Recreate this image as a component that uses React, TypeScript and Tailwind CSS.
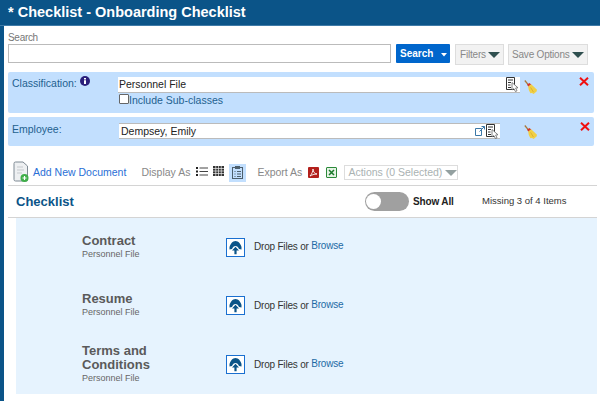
const Caret = ({ w = 12, h = 6, c = "#2f4f4f" }: { w?: number; h?: number; c?: string }) => (
  <svg width={w} height={h} viewBox="0 0 12 6" className="shrink-0"><path d="M0 0H12L6 6Z" fill={c} /></svg>
);

const Broom = () => (
  <svg width="13" height="14" viewBox="0 0 13 14" className="shrink-0">
    <path d="M0.8 0.5 L4.4 4.8" stroke="#a8793a" strokeWidth="1.3" />
    <path d="M3 4.8 L5.4 3 L7.2 4.6 L4.6 6.8Z" fill="#d4352a" />
    <path d="M4.2 6.4 L7.2 4.2 L13 9.8 L12.6 11.4 L9.6 14 L8 13 L6.4 13.2 L4.8 10Z" fill="#f0cf45" />
    <path d="M6.6 7.4 L9.4 12" stroke="#d8a92a" strokeWidth="0.8" />
  </svg>
);

const Lookup = () => (
  <svg width="14" height="15" viewBox="0 0 14 15" className="shrink-0">
    <path d="M0.5 0.5H8.5V12.5H0.5Z" fill="#fff" stroke="#333" />
    <path d="M2 3H7M2 5.5H5M2 8H4.5M2 10.5H5" stroke="#333" />
    <path d="M6 5.5 L6 13 L7.8 11.6 L9.4 14.5 L11 13.8 L9.6 11 L12 10.8Z" fill="#fff" stroke="#666" strokeWidth="0.8" />
  </svg>
);

const XMark = () => (
  <svg width="10" height="9" viewBox="0 0 10 9" className="shrink-0">
    <path d="M1 0.8 L9 8.2 M9 0.8 L1 8.2" stroke="#f01010" strokeWidth="2" />
  </svg>
);

const UploadIcon = () => (
  <div className="flex h-[19px] w-[19px] items-center justify-center border border-[#1a6fd0] bg-white">
    <svg width="15" height="15" viewBox="0 0 15 15">
      <path d="M7.5 1 C10.5 1 12.5 3.8 13.5 7 L13.5 9.5 L11 9 C10.2 7.2 9 6 7.5 6 C6 6 4.8 7.2 4 9 L1.5 9.5 L1.5 7 C2.5 3.8 4.5 1 7.5 1Z" fill="#0b5488" />
      <path d="M7.5 6.8 L11 10.6 H8.6 V14.2 H6.4 V10.6 H4Z" fill="#0b5488" />
    </svg>
  </div>
);

const Row = ({ title }: { title: string }) => (
  <div className="flex h-[58.67px] items-center pl-[66px]">
    <div className="mt-[-1px] w-[144px]">
      <div className="w-[90px] text-[13px] font-bold leading-[14px] text-[#5a5a5a]">{title}</div>
      <div className="pt-[1px] text-[9px] leading-[11px] text-[#666]">Personnel File</div>
    </div>
    <UploadIcon />
    <div className="ml-[9px] text-[10px] leading-none tracking-[-0.2px] text-[#333]">
      Drop Files or <span className="relative top-[-1px] text-[#1d6aa5]">Browse</span>
    </div>
  </div>
);

export default function App() {
  return (
    <div className="flex h-[401px] w-[600px] flex-col overflow-hidden bg-white font-['Liberation_Sans',Arial,sans-serif]">
      <div className="flex h-[26px] shrink-0 items-center border-b border-[#3f7ba8] bg-[#0b5488] pl-[8px] text-[14.5px] font-bold text-white">
        * Checklist - Onboarding Checklist
      </div>
      <div className="flex min-h-0 flex-1 border-l-4 border-[#0b5488]">
        <div className="w-[593px] pl-[4px]">
          <div className="mt-[6px] text-[10px] leading-[12px] tracking-[-0.3px] text-[#777]">Search</div>
          <div className="flex items-start">
            <div className="h-[19px] w-[383px] border border-[#bbb] bg-white" />
            <div className="ml-[5px] flex h-[19px] w-[54px] items-center rounded-[1px] bg-[#0066cc] pl-[4px] text-[10px] font-bold text-white">
              Search
              <svg width="6" height="4" viewBox="0 0 6 4" className="ml-[8px] mt-[3px]"><path d="M0 0H6L3 3.5Z" fill="#fff" /></svg>
            </div>
            <div className="ml-[5px] flex h-[21px] w-[49px] items-center gap-[2px] border border-[#ddd] bg-[#f2f2f2] pl-[4px] text-[10px] tracking-[-0.2px] text-[#888]">
              Filters<Caret />
            </div>
            <div className="ml-[4px] flex h-[21px] w-[80px] items-center gap-[2px] border border-[#ddd] bg-[#f2f2f2] pl-[3px] text-[10px] tracking-[-0.2px] text-[#888]">
              Save Options<Caret />
            </div>
          </div>

          <div className="mt-[7px] flex h-[41px] w-[586px] rounded-[2px] bg-[#c2dffe] pt-[5px] pl-[4px]">
            <div className="flex w-[106px] text-[10.5px] leading-[12px] text-[#22618f]">
              Classification:
              <svg width="10" height="10" viewBox="0 0 10 10" className="ml-[3px] mt-[-1px]"><circle cx="5" cy="5" r="5" fill="#2a1f7a" /><path d="M4 2h2v1.4H4zM4 4.2h2V8H4z" fill="#fff" /></svg>
            </div>
            <div>
              <div className="flex h-[16px] w-[402px] items-center justify-between border-b border-b-[#bbb] bg-white pl-[1px] pt-[1px] text-[10.5px] text-[#222]">
                Personnel File
                <span className="mt-[-1px]"><Lookup /></span>
              </div>
              <div className="flex h-[14px] items-center text-[10.5px] leading-none text-[#22618f]">
                <span className="ml-[1px] mt-[-2px] h-[10px] w-[10px] rounded-[1px] border border-[#666] bg-white" />
                Include Sub-classes
              </div>
            </div>
            <div className="ml-[4px] mt-[3px]"><Broom /></div>
            <div className="ml-[42px] mt-[0px]"><XMark /></div>
          </div>

          <div className="mt-[4px] flex h-[29px] w-[586px] rounded-[2px] bg-[#c2dffe] pt-[6px] pl-[4px]">
            <div className="w-[107px] text-[10.5px] leading-[12px] text-[#22618f]">Employee:</div>
            <div className="flex h-[16px] w-[381px] items-center justify-between border-t border-t-[#bbb] border-b border-b-[#bbb] bg-white pl-[2px] pt-[1px] text-[10.5px] text-[#222]">
              Dempsey, Emily
              <span className="mt-[-1px] flex items-center gap-[1px]">
                <svg width="10" height="10" viewBox="0 0 10 10"><path d="M6.5 0.5H9.5V3.5M9.3 0.7 L4.5 5.5M0.5 2.5H6.5V9.5H0.5Z" fill="none" stroke="#3b78a8" /></svg>
                <Lookup />
              </span>
            </div>
            <div className="ml-[24px] mt-[2px]"><Broom /></div>
            <div className="ml-[43px] mt-[-1px]"><XMark /></div>
          </div>

          <div className="mt-[14px] flex h-[26px] items-center border-b border-[#d4d4d4]">
            <svg width="17" height="22" viewBox="0 0 17 22" className="ml-[5px] mt-[-1px]">
              <path d="M1 2.5 Q1 1 2.5 1 H10 L14.5 5 V19 Q14.5 20 13 20 H2.5 Q1 20 1 18.5Z" fill="#eef0f2" stroke="#7f8a94" />
              <path d="M4 6H10M4 9H11M4 12H9" stroke="#c5c9cd" />
              <circle cx="11.5" cy="17" r="4" fill="#3fae49" />
              <path d="M9.5 17H13.5M11.5 15V19" stroke="#fff" strokeWidth="1.2" />
            </svg>
            <span className="ml-[3px] text-[10.5px] text-[#2a6fd6]">Add New Document</span>
            <span className="ml-[15px] text-[10.5px] text-[#888]">Display As</span>
            <svg width="12" height="11" viewBox="0 0 12 11" className="ml-[6px] mt-[-3px]">
              <path d="M0 1h2v2H0zM0 4.5h2v2H0zM0 8h2v2H0z" fill="#222" /><path d="M3.5 2H12M3.5 5.5H12M3.5 9H12" stroke="#444" />
            </svg>
            <svg width="11" height="10" viewBox="0 0 11 10" className="ml-[5px] mt-[-3px]">
              <rect x="0" y="0" width="11" height="10" fill="#333" />
              <path d="M2.75 0V10M5.5 0V10M8.25 0V10M0 2.5H11M0 5H11M0 7.5H11" stroke="#eee" strokeWidth="0.7" />
            </svg>
            <span className="ml-[5px] flex h-[18px] w-[17px] items-center justify-center bg-[#c2dffe]">
              <svg width="11" height="13" viewBox="0 0 11 13">
                <rect x="0.5" y="1.5" width="10" height="11" fill="none" stroke="#4d5f6c" />
                <rect x="3" y="0" width="5" height="3" fill="#4d5f6c" />
                <path d="M2.5 5.5h1M5 5.5h4M2.5 8h1M5 8h4M2.5 10.5h1M5 10.5h4" stroke="#4d5f6c" />
              </svg>
            </span>
            <span className="ml-[11px] text-[10.5px] text-[#888]">Export As</span>
            <span className="ml-[6px] flex h-[11px] w-[11px] items-center justify-center rounded-[1px] bg-[#b3201c]">
              <svg width="9" height="9" viewBox="0 0 9 9"><path d="M1 8 C3 6 4 3 4 1 C4 4 6 6 8 6 C5 6 3 7 1 8Z" fill="none" stroke="#fff" strokeWidth="0.9" /></svg>
            </span>
            <span className="ml-[7px] flex h-[11px] w-[11px] items-center justify-center rounded-[1px] border border-[#2c8a3a] bg-[#e6f3e6]">
              <svg width="7" height="7" viewBox="0 0 7 7"><path d="M1 1L6 6M6 1L1 6" stroke="#1c7a2c" strokeWidth="1.5" /></svg>
            </span>
            <div className="ml-[7px] flex h-[15px] w-[114px] items-center gap-[3px] border border-[#ddd] pl-[3px] text-[10.5px] text-[#aab2b2]">
              Actions (0 Selected)<Caret c="#93a0a0" />
            </div>
          </div>

          <div className="flex h-[32px] items-center border-b border-[#d4d4d4] pl-[8px]">
            <span className="w-[349px] text-[13px] font-bold text-[#0b5488]">Checklist</span>
            <span className="flex h-[19px] w-[44px] items-center rounded-full bg-[#a0a0a0] pl-[1px]">
              <span className="h-[15px] w-[15px] rounded-full bg-white" />
            </span>
            <span className="ml-[4px] mt-[-1px] w-[69px] text-[10px] font-bold tracking-[-0.15px] text-[#222]">Show All</span>
            <span className="mt-[-1px] text-[9.5px] text-[#333]">Missing 3 of 4 Items</span>
          </div>

          <div className="ml-[8px] h-[176px] bg-[#e6f3fe]">
            <Row title="Contract" />
            <Row title="Resume" />
            <Row title="Terms and Conditions" />
          </div>
        </div>
      </div>
    </div>
  );
}
